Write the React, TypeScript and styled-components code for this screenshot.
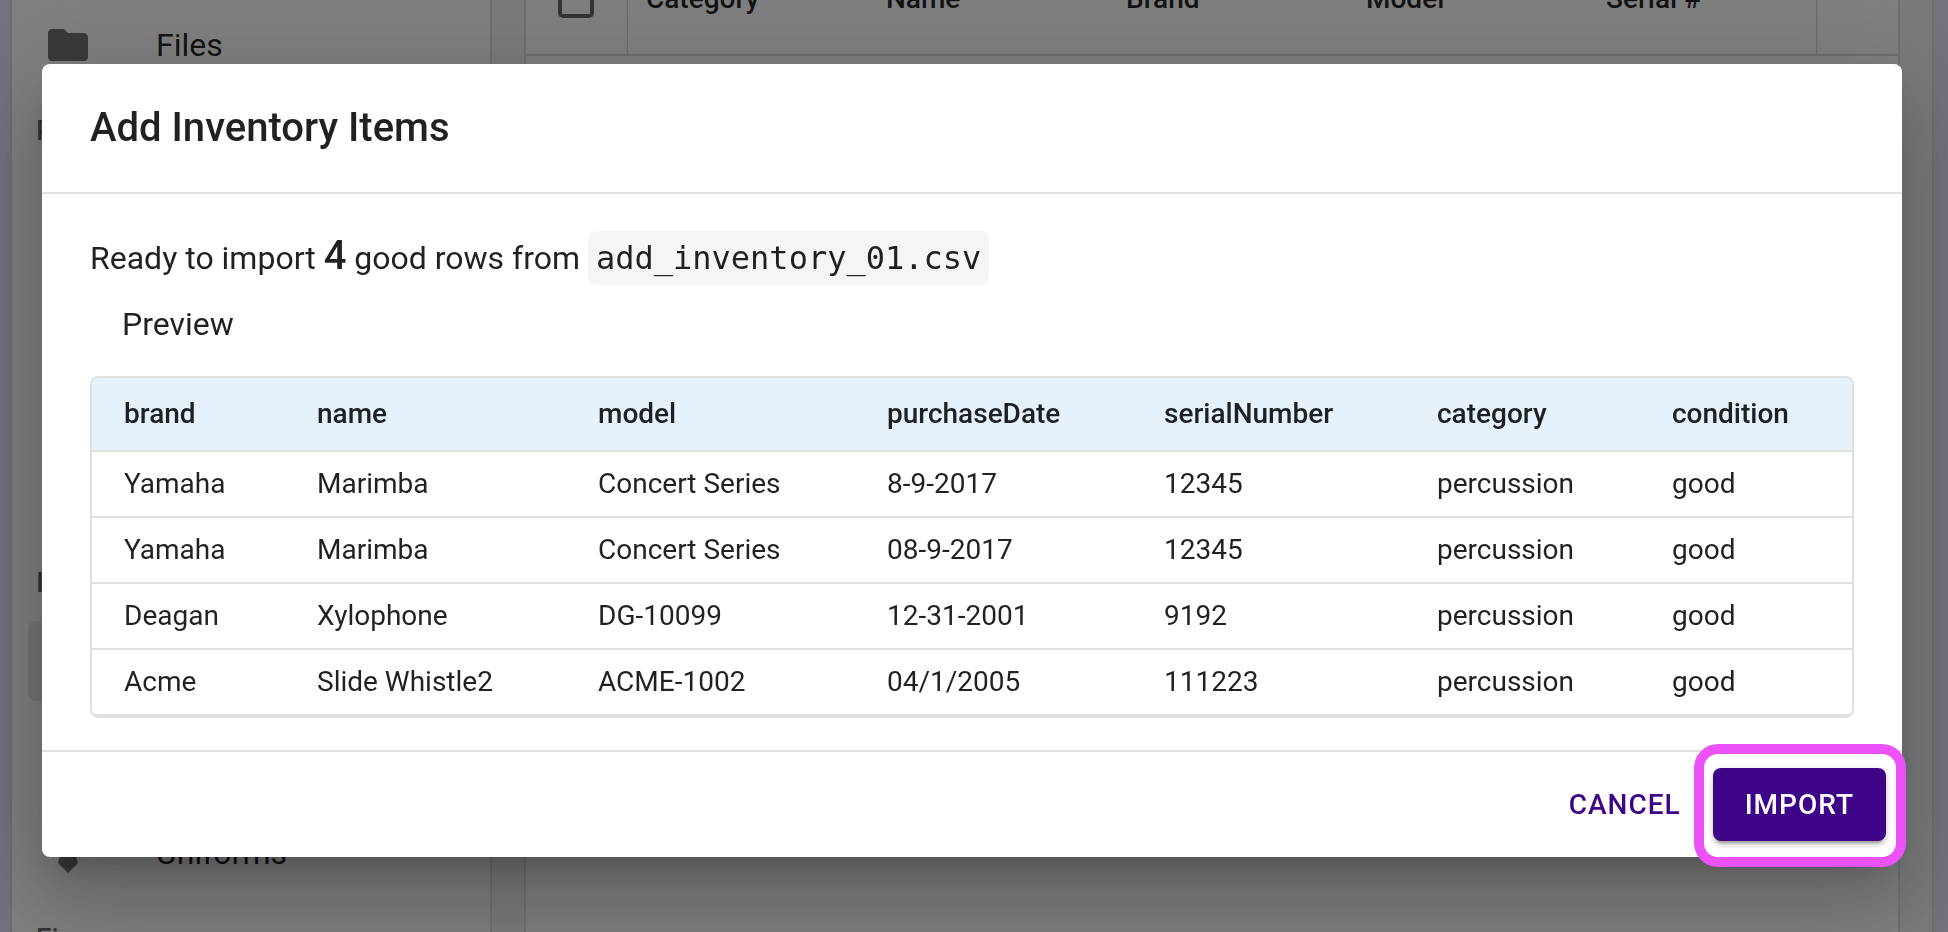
import React from "react";
import styled, { createGlobalStyle } from "styled-components";

const GlobalStyle = createGlobalStyle`
  *, *::before, *::after { box-sizing: border-box; }
  body {
    margin: 0;
    height: 100vh;
    overflow: hidden;
    background: #e4e4fa;
    color: rgba(0, 0, 0, 0.87);
    font-family: Roboto, "Liberation Sans", sans-serif;
    font-size: 32px;
    line-height: 48px;
  }
  #root { height: 100%; }
`;

/* ---------- page behind the dialog ---------- */

const Shell = styled.div`
  display: flex;
  height: 100%;
  margin: 0 14px 0 10px;
  border: solid #dcdcdc;
  border-width: 0 2px;
  background: #f3f5f9;
  overflow: hidden;
`;

const Sidebar = styled.nav`
  flex: 0 0 480px;
  margin-top: -3px;
  padding: 0 16px;
  border-right: 2px solid #e0e0e0;
  background: #fff;
`;

const NavItem = styled.a<{ $selected?: boolean }>`
  display: flex;
  align-items: center;
  gap: 64px;
  height: 80px;
  margin: 8px 0;
  padding: 0 16px;
  border-radius: 8px;
  background: ${(p) => (p.$selected ? "rgba(0, 0, 0, 0.08)" : "transparent")};
  color: inherit;
  text-decoration: none;
`;

const NavList = styled.div`
  display: flex;
  flex-direction: column;
`;

const NavHeading = styled.h2`
  margin: 0;
  padding: 18px 8px 10px;
  font-size: 28px;
  line-height: 40px;
  font-weight: 500;
  color: rgba(0, 0, 0, 0.6);
`;

const NavIcon = styled.svg`
  flex: none;
  width: 48px;
  height: 48px;
  fill: rgba(0, 0, 0, 0.54);
`;

const Main = styled.main`
  flex: 1;
  min-width: 0;
  padding: 0 32px;
`;

const Card = styled.section`
  height: calc(100% + 80px);
  margin-top: -58px;
  border: 2px solid #e0e0e0;
  background: #fff;
`;

const GridTable = styled.table`
  width: 100%;
  table-layout: fixed;
  border-collapse: separate;
  border-spacing: 0;
`;

const GridHead = styled.th<{ $width?: number; $divided?: "left" | "right" }>`
  width: ${(p) => (p.$width ? `${p.$width}px` : "auto")};
  height: 112px;
  padding: 0 0 0 18px;
  border-bottom: 2px solid #dadada;
  box-shadow: ${(p) =>
    p.$divided === "right"
      ? "inset -2px 0 2px -1px #ccc"
      : p.$divided === "left"
        ? "inset 2px 0 2px -1px #ccc"
        : "none"};
  font-size: 28px;
  line-height: 40px;
  font-weight: 500;
  text-align: left;
  white-space: nowrap;
`;

const GridCheckbox = styled.input`
  appearance: none;
  display: block;
  width: 36px;
  height: 36px;
  margin: 2px 0 0 14px;
  border: 4px solid rgba(0, 0, 0, 0.6);
  border-radius: 5px;
`;

/* ---------- dialog ---------- */

const Backdrop = styled.div`
  position: fixed;
  inset: 0;
  display: flex;
  align-items: center;
  padding: 0 46px 12px 42px;
  background: rgba(0, 0, 0, 0.5);
`;

const Dialog = styled.div`
  flex: 1;
  border-radius: 8px;
  background: #fff;
  box-shadow:
    0 22px 30px -14px rgba(0, 0, 0, 0.2),
    0 48px 76px 6px rgba(0, 0, 0, 0.14),
    0 18px 92px 16px rgba(0, 0, 0, 0.12);
`;

const DialogTitle = styled.h1`
  margin: 0;
  padding: 32px 48px;
  font-size: 40px;
  line-height: 64px;
  font-weight: 500;
`;

const DialogContent = styled.div`
  padding: 30px 48px 32px;
  border: solid #e0e0e0;
  border-width: 2px 0;
`;

const Summary = styled.p`
  margin: 0;
  line-height: 64px;
`;

const Count = styled.strong`
  font-size: 40px;
  font-weight: 500;
`;

const FileName = styled.code`
  padding: 8px;
  border-radius: 8px;
  background: #f5f5f5;
  font-family: "DejaVu Sans Mono", monospace;
  font-size: 32px;
  line-height: 48px;
`;

const PreviewLabel = styled.h2`
  margin: 0;
  padding: 10px 32px 28px;
  font-size: 32px;
  font-weight: 400;
`;

const TableFrame = styled.div`
  border: 2px solid #e0e0e0;
  border-radius: 8px;
  overflow: hidden;
`;

const PreviewTable = styled.table`
  width: 100%;
  table-layout: fixed;
  border-collapse: separate;
  border-spacing: 0;
  font-size: 28px;
`;

const HeadCell = styled.th<{ $width: number }>`
  width: ${(p) => p.$width}px;
  padding: 12px 0 12px 32px;
  border-bottom: 2px solid #e0e0e0;
  background: #e5f2fc;
  font-weight: 500;
  text-align: left;
  white-space: nowrap;
`;

const Cell = styled.td`
  padding: 12px 0 12px 32px;
  border-bottom: 2px solid #e0e0e0;
  line-height: 40px;
  white-space: nowrap;
`;

const DialogActions = styled.div`
  display: flex;
  justify-content: flex-end;
  gap: 16px;
  padding: 16px;
`;

const Button = styled.button<{ $primary?: boolean }>`
  padding: 12px ${(p) => (p.$primary ? 32 : 16)}px;
  border: 0;
  border-radius: 8px;
  background: ${(p) => (p.$primary ? "#3e0588" : "transparent")};
  color: ${(p) => (p.$primary ? "#fff" : "#3e0588")};
  box-shadow: ${(p) =>
    p.$primary
      ? "0 6px 2px -4px rgba(0, 0, 0, 0.2), 0 4px 4px rgba(0, 0, 0, 0.14), 0 2px 10px rgba(0, 0, 0, 0.12)"
      : "none"};
  font: 500 28px/49px Roboto, "Liberation Sans", sans-serif;
  letter-spacing: 1px;
  text-transform: uppercase;
  cursor: pointer;
`;

const Highlight = styled.div`
  position: relative;

  &::after {
    content: "";
    position: absolute;
    inset: -24px -20px -26px -19px;
    border: 10px solid #ec52f8;
    border-radius: 24px;
    pointer-events: none;
  }
`;

/* ---------- data ---------- */

/* fixed-layout widths; the table scales them to the room it has */
const columns = [
  { key: "brand", width: 193 },
  { key: "name", width: 281 },
  { key: "model", width: 289 },
  { key: "purchaseDate", width: 277 },
  { key: "serialNumber", width: 273 },
  { key: "category", width: 235 },
  { key: "condition", width: 212 },
];

const rows = [
  ["Yamaha", "Marimba", "Concert Series", "8-9-2017", "12345", "percussion", "good"],
  ["Yamaha", "Marimba", "Concert Series", "08-9-2017", "12345", "percussion", "good"],
  ["Deagan", "Xylophone", "DG-10099", "12-31-2001", "9192", "percussion", "good"],
  ["Acme", "Slide Whistle2", "ACME-1002", "04/1/2005", "111223", "percussion", "good"],
];

const FolderIcon = () => (
  <NavIcon viewBox="0 0 24 24" aria-hidden="true">
    <path d="M10 4H4c-1.100 0-1.990.9-1.990 2L2 18c0 1.100.9 2 2 2h16c1.100 0 2-.9 2-2V8c0-1.100-.9-2-2-2h-8l-2-2z" />
  </NavIcon>
);

const TieIcon = () => (
  <NavIcon viewBox="0 0 24 24" aria-hidden="true">
    <path d="M6 2l4 4-3 11 5 5 5-5-3-11 4-4z" />
  </NavIcon>
);

export default function App() {
  return (
    <>
      <GlobalStyle />
      <Shell>
        <Sidebar>
          <NavList>
            <NavItem href="#files">
              <FolderIcon />
              Files
            </NavItem>
            <NavHeading>People</NavHeading>
            <NavItem />
            <NavItem />
            <NavItem />
            <NavItem />
            <NavHeading>Inventory</NavHeading>
            <NavItem $selected />
            <NavItem />
            <NavItem href="#uniforms">
              <TieIcon />
              Uniforms
            </NavItem>
            <NavHeading>Finances</NavHeading>
          </NavList>
        </Sidebar>
        <Main>
          <Card>
            <GridTable>
              <thead>
                <tr>
                  <GridHead $width={102} $divided="right">
                    <GridCheckbox type="checkbox" aria-label="Select all rows" />
                  </GridHead>
                  <GridHead $width={240}>Category</GridHead>
                  <GridHead $width={240}>Name</GridHead>
                  <GridHead $width={240}>Brand</GridHead>
                  <GridHead $width={240}>Model</GridHead>
                  <GridHead>Serial #</GridHead>
                  <GridHead $width={82} $divided="left" />
                </tr>
              </thead>
            </GridTable>
          </Card>
        </Main>
      </Shell>
      <Backdrop>
        <Dialog role="dialog" aria-modal="true" aria-labelledby="dialog-title">
          <DialogTitle id="dialog-title">Add Inventory Items</DialogTitle>
          <DialogContent>
            <Summary>
              Ready to import <Count>4</Count> good rows from <FileName>add_inventory_01.csv</FileName>
            </Summary>
            <PreviewLabel>Preview</PreviewLabel>
            <TableFrame>
              <PreviewTable>
                <thead>
                  <tr>
                    {columns.map((c) => (
                      <HeadCell key={c.key} $width={c.width} scope="col">
                        {c.key}
                      </HeadCell>
                    ))}
                  </tr>
                </thead>
                <tbody>
                  {rows.map((row, i) => (
                    <tr key={i}>
                      {row.map((value, j) => (
                        <Cell key={j}>{value}</Cell>
                      ))}
                    </tr>
                  ))}
                </tbody>
              </PreviewTable>
            </TableFrame>
          </DialogContent>
          <DialogActions>
            <Button type="button">Cancel</Button>
            <Highlight>
              <Button type="button" $primary>
                Import
              </Button>
            </Highlight>
          </DialogActions>
        </Dialog>
      </Backdrop>
    </>
  );
}
